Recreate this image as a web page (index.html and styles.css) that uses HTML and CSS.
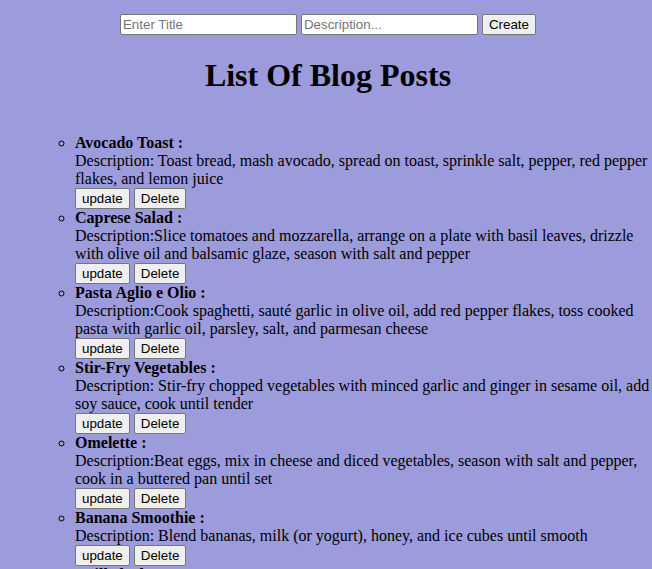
FILE: index.html
```html
<!DOCTYPE html>
<html lang="en">
<head>
<meta charset="utf-8">
<title>Blog Posts</title>
<link rel="stylesheet" href="styles.css">
</head>
<body>
<div class="page">
  <div class="create-form">
    <input class="field" type="text" placeholder="Enter Title">
    <input class="field" type="text" placeholder="Description...">
    <button class="btn" type="button">Create</button>
  </div>
  <h1 class="heading">List Of Blog Posts</h1>
  <ul class="posts">
    <li class="post">
      <b>Avocado Toast :</b><br>
      Description: Toast bread, mash avocado, spread on toast, sprinkle salt, pepper, red pepper flakes, and lemon juice<br>
      <div class="actions"><button class="btn" type="button">update</button><button class="btn" type="button">Delete</button></div>
    </li>
    <li class="post">
      <b>Caprese Salad :</b><br>
      Description:Slice tomatoes and mozzarella, arrange on a plate with basil leaves, drizzle with olive oil and balsamic glaze, season with salt and pepper<br>
      <div class="actions"><button class="btn" type="button">update</button><button class="btn" type="button">Delete</button></div>
    </li>
    <li class="post">
      <b>Pasta Aglio e Olio :</b><br>
      Description:Cook spaghetti, sauté garlic in olive oil, add red pepper flakes, toss cooked pasta with garlic oil, parsley, salt, and parmesan cheese<br>
      <div class="actions"><button class="btn" type="button">update</button><button class="btn" type="button">Delete</button></div>
    </li>
    <li class="post">
      <b>Stir-Fry Vegetables :</b><br>
      Description: Stir-fry chopped vegetables with minced garlic and ginger in sesame oil, add soy sauce, cook until tender<br>
      <div class="actions"><button class="btn" type="button">update</button><button class="btn" type="button">Delete</button></div>
    </li>
    <li class="post">
      <b>Omelette :</b><br>
      Description:Beat eggs, mix in cheese and diced vegetables, season with salt and pepper, cook in a buttered pan until set<br>
      <div class="actions"><button class="btn" type="button">update</button><button class="btn" type="button">Delete</button></div>
    </li>
    <li class="post">
      <b>Banana Smoothie :</b><br>
      Description: Blend bananas, milk (or yogurt), honey, and ice cubes until smooth<br>
      <div class="actions"><button class="btn" type="button">update</button><button class="btn" type="button">Delete</button></div>
    </li>
    <li class="post">
      <b>Grilled Cheese :</b><br>
      Description: Butter bread, add cheese, and grill until golden<br>
      <div class="actions"><button class="btn" type="button">update</button><button class="btn" type="button">Delete</button></div>
    </li>
  </ul>
</div>
</body>
</html>
```

FILE: styles.css
```css
html {
  overflow: hidden;
  background: #9c9bdb;
}

body {
  margin: 0;
  padding: 0 0 0 8px;
  font-family: "Liberation Serif", "Times New Roman", serif;
  font-size: 16px;
  color: #000;
  background: #9c9bdb;
}

.page {
  width: 640px;
}

.create-form {
  display: flex;
  justify-content: center;
  gap: 4px;
  padding-top: 14px;
}

.field {
  box-sizing: border-box;
  width: 177px;
  height: 21px;
  margin: 0;
  padding: 1px 2px;
  font-family: "Liberation Sans", Arial, sans-serif;
  font-size: 13.333px;
  border: 1px solid #767676;
  border-radius: 2px;
  background: #fff;
  color: #000;
}

.field::placeholder {
  color: #757575;
}

.btn {
  box-sizing: border-box;
  height: 21px;
  margin: 0;
  padding: 1px 6px;
  font-family: "Liberation Sans", Arial, sans-serif;
  font-size: 13.333px;
  color: #000;
  background: #efefef;
  border: 1px solid #767676;
  border-radius: 2px;
}

.heading {
  margin: 22px 0 0;
  font-size: 32px;
  font-weight: bold;
  text-align: center;
  line-height: 37px;
}

.posts {
  list-style: circle;
  margin: 40px -8px 0 0;
  padding: 0 0 0 67px;
}

.post {
  line-height: 18px;
}

.actions {
  display: flex;
  gap: 4px;
}
```
